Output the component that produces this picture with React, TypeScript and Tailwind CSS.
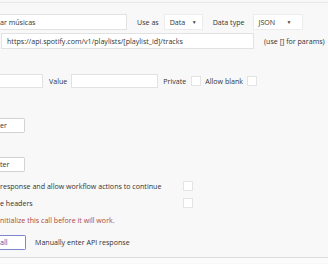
import React from "react"

const font = { fontFamily: '"Open Sans", "Noto Sans", sans-serif' }

function Caret() {
  return <span className="text-[5px] leading-none text-[#444]">▼</span>
}

function Box({ className = "" }: { className?: string }) {
  return <span className={`inline-block h-[10px] w-[10px] border border-[#e4e4e4] bg-white ${className}`} />
}

export default function App() {
  return (
    <div className="h-[264px] w-[328px] overflow-hidden whitespace-nowrap bg-[#f8f8f8] text-[7.1px] text-[#333]" style={font}>
      <div className="h-[3px] border-b border-[#e8e8e8]" />

      <div className="mt-[11px] flex h-[16px] items-center">
        <div className="flex h-full w-[127px] items-center border border-l-0 border-[#e2e2e2] bg-white">ar músicas</div>
        <span className="ml-[10px]">Use as</span>
        <div className="ml-[5px] flex h-full w-[39px] items-center justify-between border border-[#ececec] bg-white px-[5px]">
          <span>Data</span>
          <Caret />
        </div>
        <span className="ml-[10px]">Data type</span>
        <div className="ml-[8px] flex h-full w-[50px] items-center justify-between border border-[#ececec] bg-white pl-[5px] pr-[10px]">
          <span>JSON</span>
          <Caret />
        </div>
      </div>

      <div className="mt-[3px] flex h-[16px] items-center">
        <div className="ml-[1px] flex h-full w-[253px] items-center border border-[#e2e2e2] bg-white pl-[5px]">
          https://api.spotify.com/v1/playlists/[playlist_id]/tracks
        </div>
        <span className="ml-[10px]">(use [] for params)</span>
      </div>

      <div className="mt-[25px] flex h-[14px] items-center">
        <div className="h-full w-[43px] border border-l-0 border-[#e2e2e2] bg-white" />
        <span className="ml-[6px]">Value</span>
        <div className="ml-[4px] h-full w-[87px] border border-[#e2e2e2] bg-white" />
        <span className="ml-[5px]">Private</span>
        <Box className="ml-[5px]" />
        <span className="ml-[4px]">Allow blank</span>
        <Box className="ml-[4px]" />
      </div>

      <div className="mt-[30px] flex h-[15px] w-[25px] items-center rounded-r-[2px] border border-l-0 border-[#d2d2d2] bg-white">
        er
      </div>

      <div className="mt-[24px] flex h-[15px] w-[25px] items-center rounded-r-[2px] border border-l-0 border-[#d2d2d2] bg-white">
        ter
      </div>

      <div className="mt-[7px] flex h-[14px] items-center">
        <span className="w-[183px]">response and allow workflow actions to continue</span>
        <Box />
      </div>

      <div className="mt-[3px] flex h-[14px] items-center">
        <span className="w-[183px]">e headers</span>
        <Box />
      </div>

      <div className="mt-[5px] text-[#a8493a]">nitialize this call before it will work.</div>

      <div className="mt-[9px] flex h-[15px] items-center">
        <div className="flex h-full w-[26px] items-center rounded-r-[2px] border border-l-0 border-[#7b86cc] bg-white text-[#3f4fa8]">
          all
        </div>
        <span className="ml-[9px]">Manually enter API response</span>
      </div>

      <div className="mt-[7px] h-[6px] border-t border-[#dcdcdc] bg-[#fbfbfb]" />
    </div>
  )
}
